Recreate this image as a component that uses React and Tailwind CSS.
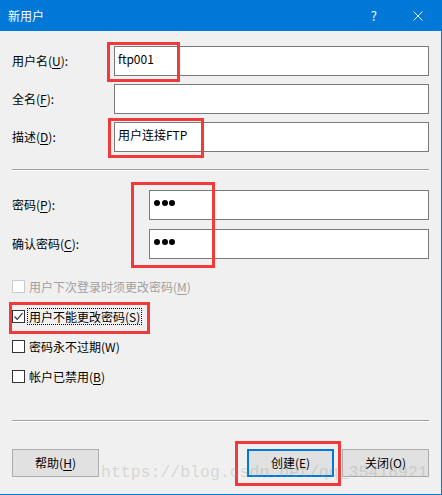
import React from 'react';

const font = { fontFamily: '"Noto Sans CJK SC", "Noto Sans", sans-serif' };

function Key({ children, plain }) {
  if (plain) return <span>{children}</span>;
  return <span className="underline underline-offset-2">{children}</span>;
}

function Field({ label, k, width, value, children }) {
  return (
    <div className="flex items-center">
      <div className={`${width} shrink-0 text-[12px] text-black`}>
        {label}(<Key>{k}</Key>):
      </div>
      <div className="flex-1 h-[30px] border border-[#7a7a7a] bg-white pl-[3px] pt-[4px] text-[12px] leading-[16px] text-black">
        {value}
        {children}
      </div>
    </div>
  );
}

function Dots() {
  return (
    <div className="flex gap-[1.5px] pl-[1px] pt-[5px]">
      <span className="w-[6px] h-[6px] rounded-full bg-black" />
      <span className="w-[6px] h-[6px] rounded-full bg-black" />
      <span className="w-[6px] h-[6px] rounded-full bg-black" />
    </div>
  );
}

function Check({ label, k, checked, disabled, focused, plain }) {
  return (
    <div className="flex items-center h-[17px] text-[12px]">
      <span
        className={`w-[13px] h-[13px] border bg-white flex items-center justify-center ${
          disabled ? 'border-[#cccccc]' : 'border-[#333333]'
        }`}
      >
        {checked && (
          <svg width="11" height="11" viewBox="0 0 11 11">
            <path d="M1.5 5.5 L4.2 8.3 L9.5 2.2" fill="none" stroke="#333" strokeWidth="1.2" />
          </svg>
        )}
      </span>
      <span
        className={`ml-[3px] px-[1px] leading-[15px] ${
          disabled ? 'text-[#a0a0a0]' : 'text-black'
        } ${focused ? 'outline outline-1 outline-dotted outline-black' : ''}`}
      >
        {label}(<Key plain={plain}>{k}</Key>)
      </span>
    </div>
  );
}

function Button({ children, primary }) {
  return (
    <button
      className={`w-[87px] h-[28px] bg-[#e1e1e1] text-[12px] text-black ${
        primary ? 'border-2 border-[#0078d7]' : 'border border-[#adadad]'
      }`}
    >
      {children}
    </button>
  );
}

function Separator() {
  return <div className="h-[2px] border-t border-[#a0a0a0] border-b border-b-white" />;
}

export default function App() {
  return (
    <div
      className="relative w-[442px] h-[495px] bg-[#f0f0f0] border-r border-b border-[#0078d7] flex flex-col overflow-hidden"
      style={font}
    >
      <div className="h-[31px] shrink-0 bg-[#0078d7] flex items-center pl-2 text-white text-[12px]">
        <span>新用户</span>
        <span className="ml-auto mr-[36px] text-[13px]">?</span>
        <svg width="10" height="10" viewBox="0 0 10 10" className="mr-[18px]">
          <path d="M0.5 0.5 L9.5 9.5 M9.5 0.5 L0.5 9.5" stroke="white" strokeWidth="1" />
        </svg>
      </div>

      <div className="flex flex-col pl-3 pr-3 pt-[15px]">
        <div className="flex flex-col gap-[8px]">
          <Field label="用户名" k="U" width="w-[102px]" value="ftp001" />
          <Field label="全名" k="F" width="w-[102px]" />
          <Field label="描述" k="D" width="w-[102px]" value="用户连接FTP" />
        </div>

        <div className="mt-[17px]">
          <Separator />
        </div>

        <div className="mt-[19px] flex flex-col gap-[9px]">
          <Field label="密码" k="P" width="w-[137px]">
            <Dots />
          </Field>
          <Field label="确认密码" k="C" width="w-[137px]">
            <Dots />
          </Field>
        </div>

        <div className="mt-[19px] flex flex-col gap-[13px]">
          <Check label="用户下次登录时须更改密码" k="M" disabled />
          <Check label="用户不能更改密码" k="S" checked focused plain />
          <Check label="密码永不过期" k="W" plain />
          <Check label="帐户已禁用" k="B" />
        </div>

        <div className="mt-[35px]">
          <Separator />
        </div>

        <div className="mt-[27px] flex items-center">
          <Button>
            帮助(<Key>H</Key>)
          </Button>
          <div className="ml-auto flex gap-[8px]">
            <Button primary>创建(E)</Button>
            <Button>关闭(O)</Button>
          </div>
        </div>
      </div>

      {/* red annotation boxes over the screenshot */}
      <div className="absolute left-[107px] top-[42px] w-[73px] h-[40px] border-[3px] border-[#f23a3a]" />
      <div className="absolute left-[108px] top-[118px] w-[96px] h-[40px] border-[3px] border-[#f23a3a]" />
      <div className="absolute left-[131px] top-[182px] w-[84px] h-[86px] border-[3px] border-[#f23a3a]" />
      <div className="absolute left-[9px] top-[302px] w-[141px] h-[32px] border-[3px] border-[#f23a3a]" />
      <div className="absolute left-[235px] top-[441px] w-[106px] h-[45px] border-[3px] border-[#f23a3a]" />

      <div
        className="absolute left-[101px] top-[463px] text-[16.5px] leading-[20px] text-[rgba(150,150,140,0.3)] pointer-events-none"
        style={{ fontFamily: '"Liberation Mono", monospace' }}
      >
        https://blog.csdn.net/qq_35418921
      </div>
    </div>
  );
}
